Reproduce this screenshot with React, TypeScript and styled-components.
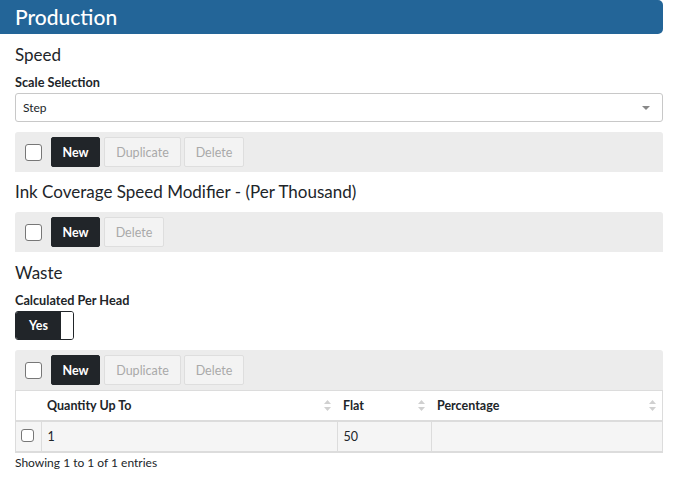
import styled, { createGlobalStyle } from 'styled-components'

const GlobalStyle = createGlobalStyle`
  body {
    margin: 0;
    background: #fff;
    font-family: Lato, "Open Sans", sans-serif;
    color: #212529;
  }
`

const Page = styled.main`
  width: 663px;
`

const Header = styled.h1`
  margin: 0;
  height: 34px;
  line-height: 34px;
  padding-left: 15px;
  background: #236598;
  color: #fff;
  font-size: 21px;
  font-weight: 500;
  border-radius: 0 5px 5px 0;
`

const Body = styled.div`
  padding-left: 15px;
  display: flex;
  flex-direction: column;
`

const SectionTitle = styled.h2<{ $top?: number }>`
  margin: ${(p) => p.$top ?? 10}px 0 0;
  font-size: 17px;
  font-weight: 400;
  line-height: 22px;
`

const Label = styled.label`
  margin-top: 8px;
  font-size: 12.7px;
  font-weight: 700;
  line-height: 16px;
`

const Select = styled.div`
  margin-top: 3px;
  height: 27px;
  border: 1px solid #c8c8c8;
  border-radius: 3px;
  display: flex;
  align-items: center;
  justify-content: space-between;
  padding: 0 12px 0 7px;
  font-size: 12px;
`

const Caret = styled.span`
  width: 0;
  height: 0;
  border-left: 4px solid transparent;
  border-right: 4px solid transparent;
  border-top: 4px solid #888;
`

const Toolbar = styled.div<{ $top?: number }>`
  margin-top: ${(p) => p.$top ?? 10}px;
  height: 40px;
  background: #ececec;
  border-radius: 3px 3px 0 0;
  display: flex;
  align-items: center;
  padding-left: 10px;
  gap: 3px;
`

const Check = styled.span<{ $size?: number }>`
  box-sizing: border-box;
  width: ${(p) => p.$size ?? 15}px;
  height: ${(p) => p.$size ?? 15}px;
  border: 1px solid #777;
  border-radius: 3px;
  background: #fff;
  display: inline-block;
  flex: none;
`

const ToolCheck = styled(Check)`
  margin-right: 6px;
`

const Button = styled.button<{ $w: number; $primary?: boolean }>`
  width: ${(p) => p.$w}px;
  height: 30px;
  border-radius: 2px;
  font-family: inherit;
  font-size: 12.5px;
  padding: 0;
  border: 1px solid ${(p) => (p.$primary ? '#212529' : '#dedede')};
  background: ${(p) => (p.$primary ? '#212529' : '#f3f3f3')};
  color: ${(p) => (p.$primary ? '#fff' : '#a9a9a9')};
  font-weight: ${(p) => (p.$primary ? 700 : 400)};
  margin-right: ${(p) => (p.$primary ? 1 : 0)}px;
`

const Toggle = styled.div`
  margin-top: 3px;
  width: 59px;
  height: 29px;
  display: flex;
  border: 1px solid #212529;
  border-radius: 3px;
  box-sizing: border-box;
  overflow: hidden;
`

const ToggleOn = styled.span`
  flex: 1;
  background: #212529;
  color: #fff;
  font-size: 12.5px;
  font-weight: 700;
  display: flex;
  align-items: center;
  justify-content: center;
`

const Knob = styled.span`
  width: 12px;
  background: #fff;
`

const Table = styled.table`
  width: 100%;
  border-collapse: collapse;
  font-size: 12.5px;
  border-left: 1px solid #dcdcdc;
  border-right: 1px solid #dcdcdc;
`

const Th = styled.th<{ $w?: number }>`
  width: ${(p) => (p.$w ? `${p.$w}px` : 'auto')};
  height: 29px;
  padding: 0 6px;
  text-align: left;
  font-weight: 700;
  border-top: 1px solid #dcdcdc;
  border-bottom: 2px solid #dcdcdc;
`

const HeadInner = styled.div`
  display: flex;
  align-items: center;
  justify-content: space-between;
`

const Td = styled.td`
  height: 29px;
  padding: 0 6px;
  background: #f5f5f5;
  border-right: 1px solid #dcdcdc;
  border-bottom: 2px solid #dcdcdc;
`

const CheckCell = styled(Td)`
  padding: 0 0 0 5px;
`

const Footer = styled.div`
  margin-top: 2px;
  font-size: 12px;
  line-height: 16px;
`

const SortIcon = () => (
  <svg width="7" height="11" viewBox="0 0 7 11">
    <path d="M3.5 0 L7 4 H0 Z M3.5 11 L7 7 H0 Z" fill="#d0d0d0" />
  </svg>
)

const Head = ({ label, w }: { label: string; w?: number }) => (
  <Th $w={w}>
    <HeadInner>
      {label}
      <SortIcon />
    </HeadInner>
  </Th>
)

const App = () => {
  return (
    <Page>
      <GlobalStyle />
      <Header>Production</Header>
      <Body>
        <SectionTitle>Speed</SectionTitle>
        <Label>Scale Selection</Label>
        <Select>
          Step
          <Caret />
        </Select>
        <Toolbar>
          <ToolCheck $size={17} />
          <Button $w={49} $primary>New</Button>
          <Button $w={77}>Duplicate</Button>
          <Button $w={60}>Delete</Button>
        </Toolbar>

        <SectionTitle $top={9}>Ink Coverage Speed Modifier - (Per Thousand)</SectionTitle>
        <Toolbar $top={9}>
          <ToolCheck $size={17} />
          <Button $w={49} $primary>New</Button>
          <Button $w={60}>Delete</Button>
        </Toolbar>

        <SectionTitle>Waste</SectionTitle>
        <Label>Calculated Per Head</Label>
        <Toggle>
          <ToggleOn>Yes</ToggleOn>
          <Knob />
        </Toggle>
        <Toolbar>
          <ToolCheck $size={17} />
          <Button $w={49} $primary>New</Button>
          <Button $w={77}>Duplicate</Button>
          <Button $w={60}>Delete</Button>
        </Toolbar>
        <Table>
          <thead>
            <tr>
              <Th $w={13} />
              <Head label="Quantity Up To" w={284} />
              <Head label="Flat" w={82} />
              <Head label="Percentage" />
            </tr>
          </thead>
          <tbody>
            <tr>
              <CheckCell>
                <Check $size={13} />
              </CheckCell>
              <Td>1</Td>
              <Td>50</Td>
              <Td />
            </tr>
          </tbody>
        </Table>
        <Footer>Showing 1 to 1 of 1 entries</Footer>
      </Body>
    </Page>
  )
}

export default App
